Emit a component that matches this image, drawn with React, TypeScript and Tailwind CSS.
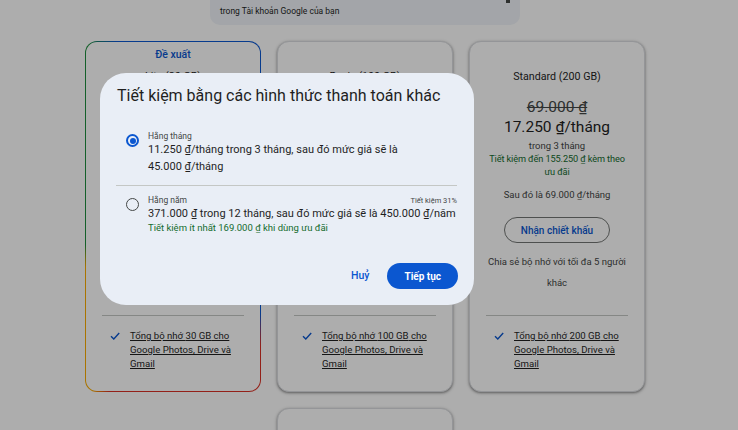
import React from 'react';

type Plan = {
  name: string;
  oldPrice: string;
  price: string;
  saving: string;
  after: string;
  storage: string;
  featured?: boolean;
};

const plans: Plan[] = [
  {
    name: 'Lite (30 GB)',
    oldPrice: '26.000 ₫',
    price: '6.500 ₫/tháng',
    saving: 'Tiết kiệm đến 58.500 ₫ kèm theo ưu đãi',
    after: 'Sau đó là 26.000 ₫/tháng',
    storage: '30 GB',
    featured: true,
  },
  {
    name: 'Basic (100 GB)',
    oldPrice: '45.000 ₫',
    price: '11.250 ₫/tháng',
    saving: 'Tiết kiệm đến 101.250 ₫ kèm theo ưu đãi',
    after: 'Sau đó là 45.000 ₫/tháng',
    storage: '100 GB',
  },
  {
    name: 'Standard (200 GB)',
    oldPrice: '69.000 ₫',
    price: '17.250 ₫/tháng',
    saving: 'Tiết kiệm đến 155.250 ₫ kèm theo ưu đãi',
    after: 'Sau đó là 69.000 ₫/tháng',
    storage: '200 GB',
  },
];

function Check() {
  return (
    <svg width="10" height="8" viewBox="0 0 10 8" fill="none">
      <path d="M1 4.2 L3.8 7 L9.2 1" stroke="#0b57d0" strokeWidth="1.4" />
    </svg>
  );
}

function PlanBody({ plan }: { plan: Plan }) {
  return (
    <>
      {plan.featured && (
        <div className="-mt-[24px] mb-[4px] text-[10.5px] leading-[20px] font-medium text-[#0b57d0]">Đề xuất</div>
      )}
      <div className="text-[10.7px] leading-[16px] text-[#1f1f1f]">{plan.name}</div>
      <div className="mt-[12px] text-[15.5px] leading-[20px] text-[#444746] line-through">{plan.oldPrice}</div>
      <div className="text-[15.5px] leading-[20px] text-[#1f1f1f]">{plan.price}</div>
      <div className="mt-[3px] text-[9.5px] leading-[12px] text-[#444746]">trong 3 tháng</div>
      <div className="text-[9.2px] leading-[13px] tracking-[-0.1px] text-[#146c2e]">{plan.saving}</div>
      <div className="mt-[10px] text-[9.5px] leading-[13px] text-[#444746]">{plan.after}</div>
      <button className="mx-auto mt-[16px] h-[26px] rounded-full border border-[#747775] px-[16px] text-[10px] font-medium text-[#0b57d0]">
        Nhận chiết khấu
      </button>
      <div className="mt-[8px] text-[9.5px] leading-[21px] text-[#444746]">Chia sẻ bộ nhớ với tối đa 5 người khác</div>
      <div className="mt-auto pt-[22px]">
        <div className="border-t border-[#c4c7c5] pt-[13px]">
          <div className="flex text-left">
            <div className="w-[28px] shrink-0 pl-[8px] pt-[3px]">
              <Check />
            </div>
            <span className="text-[9.6px] leading-[14px] text-[#1f1f1f] underline">
              Tổng bộ nhớ {plan.storage} cho Google Photos, Drive và Gmail
            </span>
          </div>
        </div>
      </div>
    </>
  );
}

export default function App() {
  const cardShadow = 'shadow-[0_1px_2px_rgba(0,0,0,0.3),0_1px_3px_1px_rgba(0,0,0,0.15)]';

  return (
    <div className="relative h-[430px] w-[738px] overflow-hidden bg-white font-[Roboto,sans-serif]">
      <div className="ml-[210px] flex h-[25px] w-[310px] items-end justify-between rounded-b-[10px] bg-[#f0f4f9] px-[10px] pb-[8px]">
        <span className="text-[8.5px] leading-[12px] text-[#1f1f1f]">trong Tài khoản Google của bạn</span>
        <span className="h-[3px] w-[4px] self-start bg-[#444746]" />
      </div>

      <div className="ml-[85px] mt-[16px] grid w-[560px] grid-cols-3 gap-[16px]">
        {plans.map((plan) =>
          plan.featured ? (
            <div
              key={plan.name}
              className="rounded-[12px] bg-[conic-gradient(from_0deg,#0b57d0_0deg_138deg,#d93025_146deg_200deg,#f9ab00_205deg_240deg,#1e8e3e_252deg_334deg,#0b57d0_342deg_360deg)] p-[1px]"
            >
              <div className="flex h-full flex-col rounded-[11px] bg-white px-[16px] pt-[27px] pb-[20px] text-center">
                <PlanBody plan={plan} />
              </div>
            </div>
          ) : (
            <div
              key={plan.name}
              className={`flex flex-col rounded-[12px] border border-[#dadce0] bg-white px-[16px] pt-[27px] pb-[20px] text-center ${cardShadow}`}
            >
              <PlanBody plan={plan} />
            </div>
          )
        )}
        <div className={`col-start-2 h-[80px] rounded-[12px] border border-[#dadce0] bg-white ${cardShadow}`} />
      </div>

      <div className="absolute inset-0 bg-black/[0.32] pl-[100px] pt-[73px]">
        <div className="w-[374px] rounded-[26px] bg-[#e9eef6] pl-[16px] pr-[16px] pt-[11px] pb-[16px]">
          <h2 className="pl-[1px] text-[16px] leading-[24px] whitespace-nowrap text-[#1f1f1f]">
            Tiết kiệm bằng các hình thức thanh toán khác
          </h2>

          <div className="mt-[24px] flex pl-[10px]">
            <div className="mt-[2px] flex h-[13px] w-[13px] shrink-0 items-center justify-center rounded-full border-2 border-[#0b57d0]">
              <div className="h-[6px] w-[6px] rounded-full bg-[#0b57d0]" />
            </div>
            <div className="ml-[9px] flex-1">
              <div className="text-[8.5px] leading-[9px] text-[#444746]">Hằng tháng</div>
              <div className="text-[11px] leading-[17px] text-[#1f1f1f]">
                11.250 ₫/tháng trong 3 tháng, sau đó mức giá sẽ là
                <br />
                45.000 ₫/tháng
              </div>
            </div>
          </div>

          <div className="mt-[10px] mr-[1px] border-t border-[#c4c7c5]" />

          <div className="mt-[10px] mr-[1px] flex pl-[10px]">
            <div className="mt-[2px] h-[13px] w-[13px] shrink-0 rounded-full border-[1.5px] border-[#444746]" />
            <div className="ml-[9px] flex-1">
              <div className="flex justify-between text-[8.5px] leading-[9px] text-[#444746]">
                <span>Hằng năm</span>
                <span className="text-[7.5px]">Tiết kiệm 31%</span>
              </div>
              <div className="text-[11px] leading-[17px] whitespace-nowrap text-[#1f1f1f]">
                371.000 ₫ trong 12 tháng, sau đó mức giá sẽ là 450.000 ₫/năm
              </div>
              <div className="text-[9.5px] leading-[12px] text-[#146c2e]">Tiết kiệm ít nhất 169.000 ₫ khi dùng ưu đãi</div>
            </div>
          </div>

          <div className="mt-[29px] flex items-center justify-end">
            <button className="mr-[18px] text-[10.5px] font-medium text-[#0b57d0]">Huỷ</button>
            <button className="h-[26px] rounded-full bg-[#0b57d0] px-[17px] text-[10px] font-bold text-white">Tiếp tục</button>
          </div>
        </div>
      </div>
    </div>
  );
}
